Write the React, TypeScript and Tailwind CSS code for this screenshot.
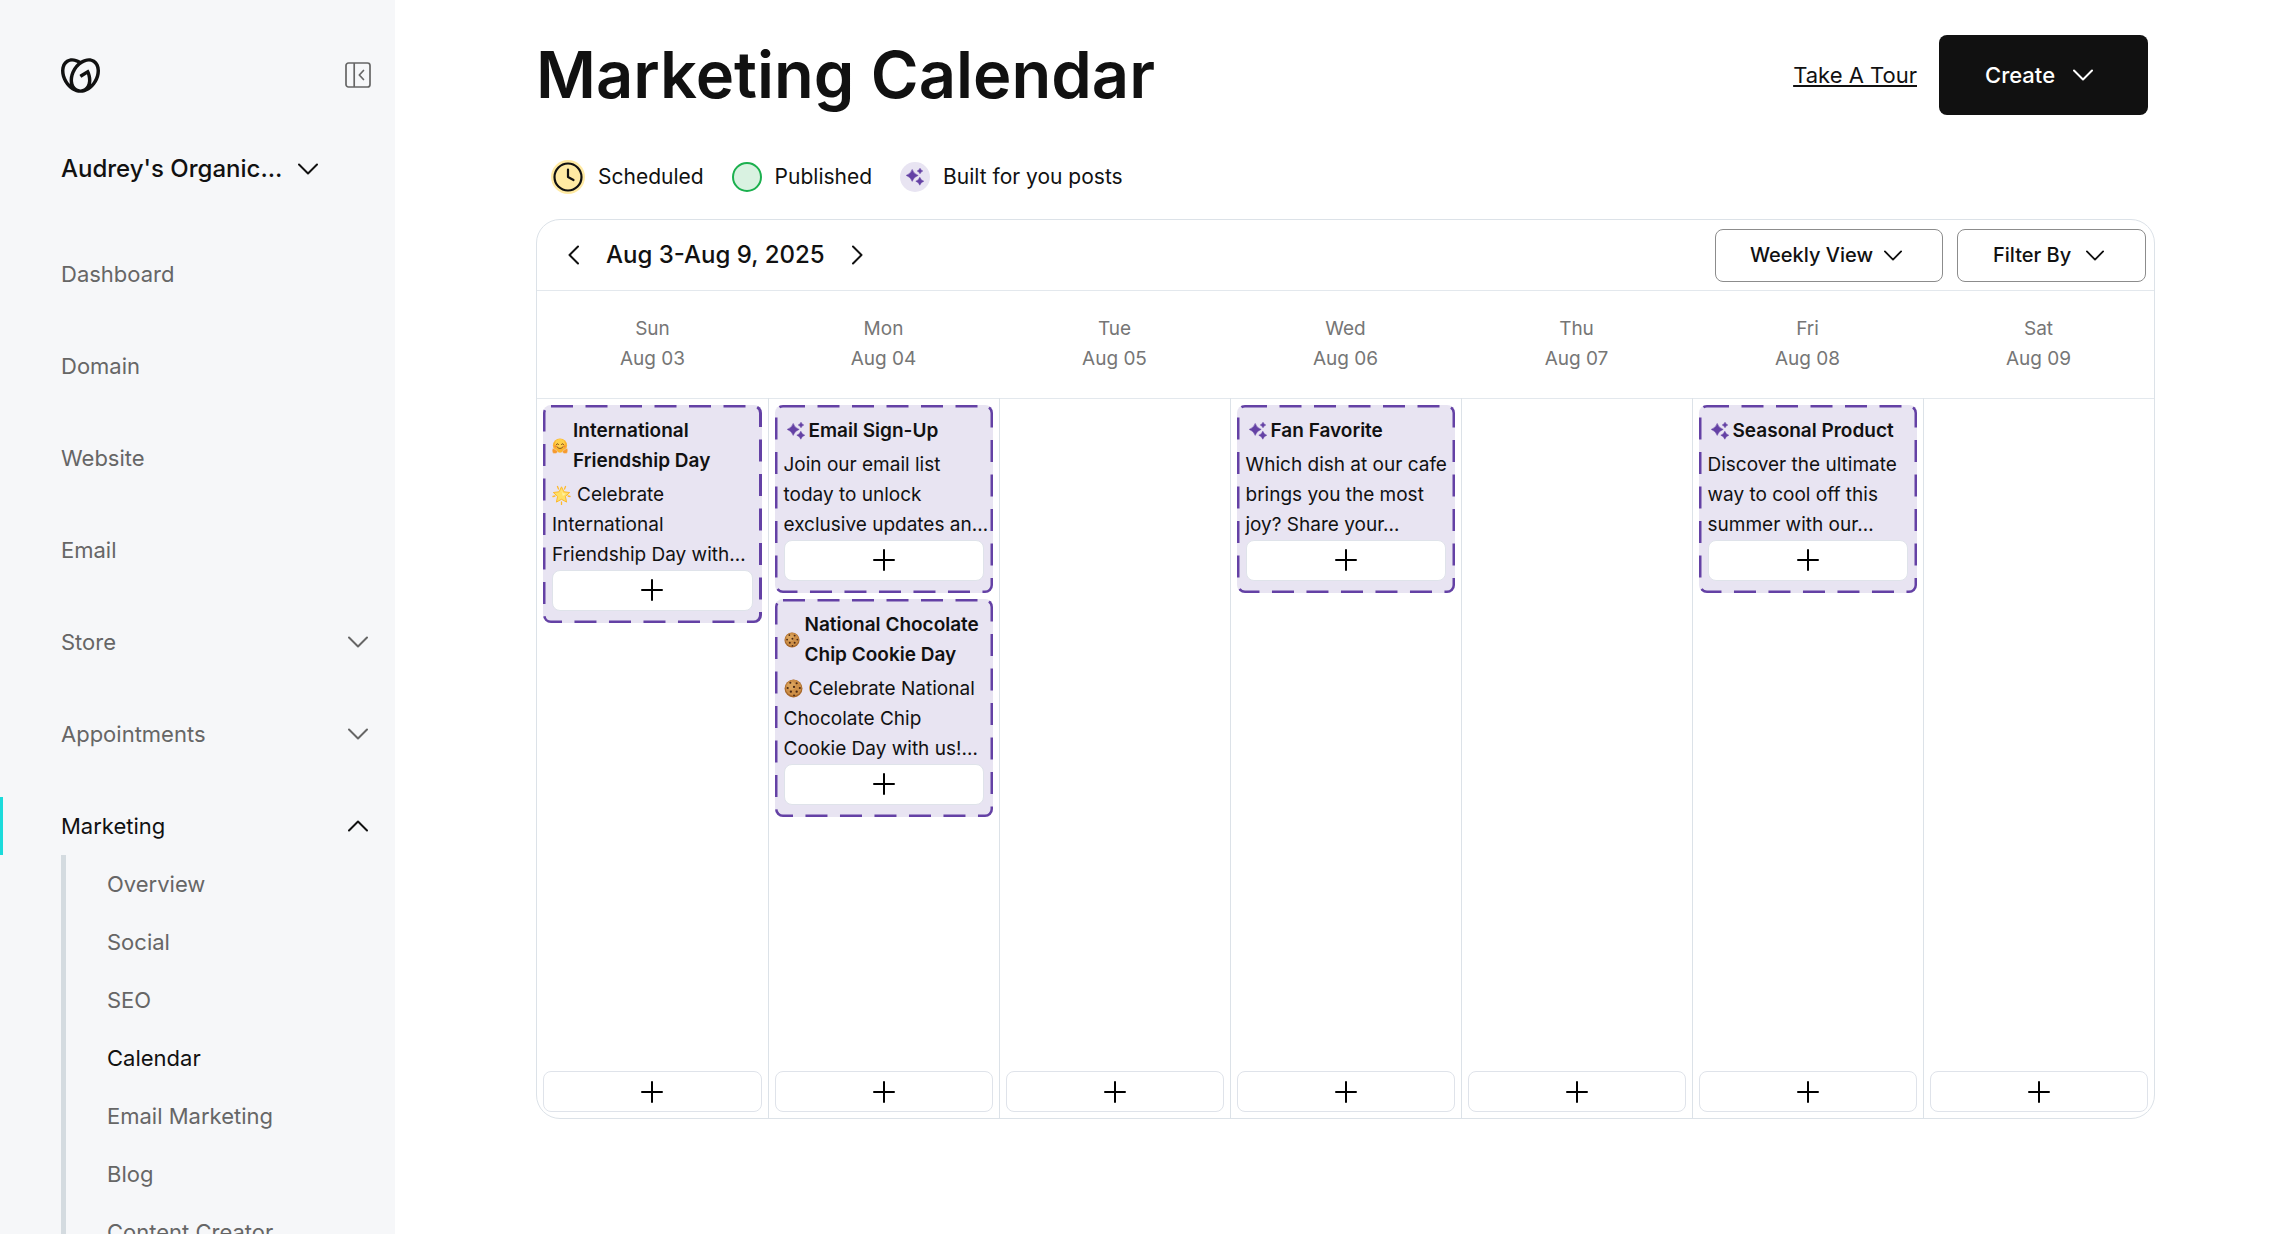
import type { ReactNode } from "react";
import { SiGodaddy } from "react-icons/si";

type NavItem = {
  label: string;
  expandable?: boolean;
  children?: string[];
};

type Post = {
  title: string[];
  body: string[];
  icon: "sparkle" | "hug" | "cookie";
  bodyIcon?: "star" | "cookie";
};

type Day = {
  name: string;
  date: string;
  posts: Post[];
};

const NAV: NavItem[] = [
  { label: "Dashboard" },
  { label: "Domain" },
  { label: "Website" },
  { label: "Email" },
  { label: "Store", expandable: true },
  { label: "Appointments", expandable: true },
  {
    label: "Marketing",
    expandable: true,
    children: ["Overview", "Social", "SEO", "Calendar", "Email Marketing", "Blog", "Content Creator"],
  },
];

const DAYS: Day[] = [
  {
    name: "Sun",
    date: "Aug 03",
    posts: [
      {
        title: ["International", "Friendship Day"],
        body: ["Celebrate", "International", "Friendship Day with…"],
        icon: "hug",
        bodyIcon: "star",
      },
    ],
  },
  {
    name: "Mon",
    date: "Aug 04",
    posts: [
      {
        title: ["Email Sign-Up"],
        body: ["Join our email list", "today to unlock", "exclusive updates an…"],
        icon: "sparkle",
      },
      {
        title: ["National Chocolate", "Chip Cookie Day"],
        body: ["Celebrate National", "Chocolate Chip", "Cookie Day with us!…"],
        icon: "cookie",
        bodyIcon: "cookie",
      },
    ],
  },
  { name: "Tue", date: "Aug 05", posts: [] },
  {
    name: "Wed",
    date: "Aug 06",
    posts: [
      {
        title: ["Fan Favorite"],
        body: ["Which dish at our cafe", "brings you the most", "joy? Share your…"],
        icon: "sparkle",
      },
    ],
  },
  { name: "Thu", date: "Aug 07", posts: [] },
  {
    name: "Fri",
    date: "Aug 08",
    posts: [
      {
        title: ["Seasonal Product"],
        body: ["Discover the ultimate", "way to cool off this", "summer with our…"],
        icon: "sparkle",
      },
    ],
  },
  { name: "Sat", date: "Aug 09", posts: [] },
];

function Chevron({ className }: { className: string }) {
  return (
    <svg viewBox="0 0 20 12" fill="none" stroke="currentColor" strokeWidth="2" strokeLinecap="round" strokeLinejoin="round" className={className} aria-hidden="true">
      <path d="M1 1.500 10 10.500l9-9" />
    </svg>
  );
}

function SideChevron({ direction }: { direction: "left" | "right" }) {
  return (
    <svg viewBox="0 0 12 20" fill="none" stroke="currentColor" strokeWidth="2" strokeLinecap="round" strokeLinejoin="round" className="h-5 w-3" aria-hidden="true">
      <path d={direction === "left" ? "M10 1.500 1.500 10l8.500 8.500" : "M2 1.500 10.500 10 2 18.500"} />
    </svg>
  );
}

function PanelIcon() {
  return (
    <svg viewBox="0 0 26 26" fill="none" stroke="currentColor" strokeWidth="1.700" strokeLinejoin="round" className="size-[26px]" aria-hidden="true">
      <rect x="1" y="1" width="24" height="24" rx="2.500" />
      <path d="M9.200 1v24" />
      <path d="m18.500 8.500-4.200 4.500 4.200 4.500" strokeLinecap="round" />
    </svg>
  );
}

function Plus() {
  return (
    <svg viewBox="0 0 22 22" stroke="currentColor" strokeWidth="2" strokeLinecap="round" className="size-[22px]" aria-hidden="true">
      <path d="M11 1v20M1 11h20" />
    </svg>
  );
}

function Sparkles() {
  return (
    <svg viewBox="0 0 18 18" fill="#6441a5" stroke="#6441a5" strokeWidth=".5" strokeLinejoin="round" className="size-[18px] shrink-0" aria-hidden="true">
      <path d="M6.200 1.400Q7.700 5.900 12.200 7.400 7.700 8.900 6.200 13.400 4.700 8.900.2 7.400 4.700 5.900 6.200 1.400Z" />
      <path d="M14 .2q.7 2.100 2.800 2.800-2.100.7-2.800 2.800-.7-2.100-2.800-2.800 2.100-.7 2.800-2.800Z" />
      <path d="M13.800 9.200q1 3 4 4-3 1-4 4-1-3-4-4 3-1 4-4Z" />
    </svg>
  );
}

function HugFace() {
  return (
    <svg viewBox="0 0 18 18" className="size-4 shrink-0" aria-hidden="true">
      <circle cx="9" cy="8.500" r="8" fill="#fbb52e" />
      <circle cx="9" cy="6.500" r="5.500" fill="#ffd14a" />
      <path d="M5 7.300c.5-1.200 1.800-1.200 2.300 0M10.700 7.300c.5-1.200 1.800-1.200 2.300 0" stroke="#6b3a12" fill="none" strokeLinecap="round" />
      <path d="M5.500 9.800c1.500 2.600 5.500 2.600 7 0" stroke="#6b3a12" fill="none" strokeLinecap="round" />
      <circle cx="4" cy="9.500" r="1.300" fill="#f58a3c" />
      <circle cx="14" cy="9.500" r="1.300" fill="#f58a3c" />
      <path d="M.5 12.500c1-1.200 2-.3 3 .6 2 .4 3 1.500 2.500 3-1 1.800-4 1.900-5.200.4C.2 15.400 0 13.600.5 12.500ZM17.500 12.500c-1-1.200-2-.3-3 .6-2 .4-3 1.500-2.500 3 1 1.800 4 1.900 5.200.4.600-1.100.8-2.900.3-4Z" fill="#f79a2e" stroke="#e8e4f2" strokeWidth=".5" />
    </svg>
  );
}

function GlowStar() {
  return (
    <svg viewBox="0 0 19 20" className="h-5 w-[19px] shrink-0" aria-hidden="true">
      <path d="M5.500 1.500l1 2.500M13.500 1.500l-1 2.500M1 11.500l2-.5M18 11.500l-2-.5M9.500 17v2.500" stroke="#ffb92e" strokeWidth="1.300" strokeLinecap="round" />
      <path d="m9.500 1.800 2.400 5 5.800.7-4.300 3.900 1.200 5.700-5.100-2.800-5.100 2.800 1.200-5.700L1.300 7.500l5.800-.7Z" fill="#ffe066" stroke="#fdb92c" strokeWidth="1" strokeLinejoin="round" />
      <path d="m9.500 5 1.300 3.200 3 .5-3 2.300Z" fill="#fff2a6" />
    </svg>
  );
}

function Cookie({ className }: { className: string }) {
  return (
    <svg viewBox="0 0 18 18" className={className} aria-hidden="true">
      <circle cx="9" cy="9" r="8.500" fill="#a9692c" />
      <circle cx="9" cy="8.300" r="7.500" fill="#cd8f48" />
      <circle cx="7" cy="6.500" r="4" fill="#dba35c" />
      <g fill="#4a2814">
        <circle cx="6" cy="3.500" r="1" />
        <circle cx="12" cy="4" r="1" />
        <circle cx="3.500" cy="8.500" r="1" />
        <circle cx="9.500" cy="7.500" r="1.100" />
        <circle cx="15" cy="8.500" r="1" />
        <circle cx="6.500" cy="12" r="1.100" />
        <circle cx="12" cy="12" r="1.100" />
        <circle cx="9.500" cy="15.500" r=".9" />
      </g>
    </svg>
  );
}

function ClockIcon() {
  return (
    <svg viewBox="0 0 30 30" fill="none" stroke="#111111" strokeWidth="2.200" strokeLinecap="round" strokeLinejoin="round" className="size-[30px]" aria-hidden="true">
      <circle cx="15" cy="15" r="13.500" />
      <path d="M15 7.500V15l5.500 3" />
    </svg>
  );
}

function AddButton({ label }: { label: string }) {
  return (
    <button
      type="button"
      aria-label={label}
      className="flex h-[41px] w-full shrink-0 items-center justify-center rounded-lg border border-[#dfe3ea] bg-white text-black"
    >
      <Plus />
    </button>
  );
}

function PostCard({ post }: { post: Post }) {
  const sparkle = post.icon === "sparkle";

  return (
    <article className="relative overflow-hidden rounded-lg bg-[#e8e4f2] px-[9px] pt-[11px] pb-3 text-[19px]">
      <svg className="pointer-events-none absolute inset-0 size-full" aria-hidden="true">
        <rect width="100%" height="100%" rx="8" fill="none" stroke="#6441a5" strokeWidth="5" strokeDasharray="22 12.500" />
      </svg>
      <h3 className={`flex items-center font-semibold ${sparkle ? "gap-1 pl-[3px]" : "gap-[5px]"}`}>
        {sparkle && <Sparkles />}
        {post.icon === "hug" && <HugFace />}
        {post.icon === "cookie" && <Cookie className="size-4 shrink-0" />}
        <span>
          {post.title.map((line) => (
            <span key={line} className="block whitespace-nowrap">
              {line}
            </span>
          ))}
        </span>
      </h3>
      <p className="mt-1">
        {post.body.map((line, index) => (
          <span key={line} className="flex items-center gap-1.5 whitespace-nowrap">
            {index === 0 && post.bodyIcon === "star" && <GlowStar />}
            {index === 0 && post.bodyIcon === "cookie" && <Cookie className="size-[19px] shrink-0" />}
            {line}
          </span>
        ))}
      </p>
      <AddButton label={`Use ${post.title.join(" ")}`} />
    </article>
  );
}

function Sidebar() {
  return (
    <aside className="w-[395px] shrink-0 overflow-hidden bg-[#f6f7f9] text-[#666666]">
      <div className="mt-[35px] flex h-20 items-center justify-between pr-6 pl-[61px]">
        <a href="#home" aria-label="Home" className="text-[#111111]">
          <SiGodaddy className="size-[39px]" />
        </a>
        <button type="button" aria-label="Collapse menu">
          <PanelIcon />
        </button>
      </div>

      <button type="button" className="mt-8 flex h-11 items-center gap-4 pl-[61px] text-2xl font-medium text-[#111111]">
        Audrey's Organic…
        <Chevron className="h-3 w-5" />
      </button>

      <nav className="mt-[54px] text-[22px]">
        <ul className="flex flex-col gap-[34px]">
          {NAV.map((item) => (
            <li key={item.label}>
              <a
                href={`#${item.label.toLowerCase()}`}
                className={`flex h-[58px] items-center justify-between border-l-[3px] pr-[27px] pl-[58px] ${
                  item.children ? "border-[#1bdbdb] text-[#111111]" : "border-transparent"
                }`}
              >
                {item.label}
                {item.expandable && <Chevron className={item.children ? "h-3 w-5 rotate-180" : "h-3 w-5"} />}
              </a>
              {item.children && (
                <ul className="ml-[61px] border-l-[5px] border-[#d4dbe0]">
                  {item.children.map((child) => (
                    <li key={child}>
                      <a
                        href={`#${child.toLowerCase().replace(" ", "-")}`}
                        className={`flex h-[58px] items-center pl-[41px] ${child === "Calendar" ? "text-[#111111]" : ""}`}
                      >
                        {child}
                      </a>
                    </li>
                  ))}
                </ul>
              )}
            </li>
          ))}
        </ul>
      </nav>
    </aside>
  );
}

function LegendItem({ marker, children }: { marker: ReactNode; children: ReactNode }) {
  return (
    <li className="flex items-center gap-[13px]">
      {marker}
      {children}
    </li>
  );
}

export default function App() {
  return (
    <div className="flex h-screen overflow-hidden bg-white font-['Inter',sans-serif] text-[#111111]">
      <Sidebar />

      <main className="min-w-0 flex-1 px-[141px] pt-[35px]">
        <header className="flex h-20 items-center justify-between pr-[7px]">
          <h1 className="text-[65px] leading-20 font-semibold">Marketing Calendar</h1>
          <div className="flex items-center gap-[22px] text-[22px]">
            <a href="#tour" className="underline underline-offset-2">
              Take A Tour
            </a>
            <button type="button" aria-haspopup="menu" className="flex h-20 w-[209px] items-center gap-[18px] rounded-lg bg-[#111111] pl-[46px] font-medium text-white">
              Create
              <Chevron className="h-3 w-5" />
            </button>
          </div>
        </header>

        <ul className="mt-[45px] flex h-[34px] items-center gap-7 pl-[15px] text-[21px]">
          <LegendItem
            marker={
              <span className="flex size-[34px] items-center justify-center rounded-full bg-[#ffeaa3]">
                <ClockIcon />
              </span>
            }
          >
            Scheduled
          </LegendItem>
          <LegendItem marker={<span className="size-[30px] rounded-full border-2 border-[#1bb04e] bg-[#d9f2e1]" />}>
            Published
          </LegendItem>
          <LegendItem
            marker={
              <span className="flex size-[30px] items-center justify-center rounded-full bg-[#e8e4f2]">
                <Sparkles />
              </span>
            }
          >
            Built for you posts
          </LegendItem>
        </ul>

        <section className="mt-[25px] overflow-hidden rounded-3xl border border-[#dce2e8]" aria-label="Weekly calendar">
          <div className="flex h-[71px] items-center justify-between border-b border-[#e3e8ed] pr-2 pl-[31px]">
            <div className="flex items-center gap-[26px] text-2xl font-medium">
              <button type="button" aria-label="Previous week">
                <SideChevron direction="left" />
              </button>
              <span>Aug 3-Aug 9, 2025</span>
              <button type="button" aria-label="Next week">
                <SideChevron direction="right" />
              </button>
            </div>
            <div className="flex items-center gap-3.5 text-[20px] font-medium">
              <div className="relative">
                <select
                  aria-label="Calendar view"
                  className="h-[53px] w-[228px] appearance-none rounded-lg border border-[#8c8c8c] bg-white pl-[34px]"
                >
                  <option>Weekly View</option>
                  <option>Monthly View</option>
                </select>
                <Chevron className="pointer-events-none absolute top-[21px] right-[41px] h-[11px] w-[18px]" />
              </div>
              <button type="button" aria-haspopup="menu" className="flex h-[53px] w-[189px] items-center gap-[15px] rounded-lg border border-[#8c8c8c] pl-[35px]">
                Filter By
                <Chevron className="h-[11px] w-[18px]" />
              </button>
            </div>
          </div>

          <table className="w-full table-fixed border-collapse text-[19px] leading-[30px]">
            <thead>
              <tr className="h-[107px] border-b border-[#e3e8ed] text-[#767676]">
                {DAYS.map((day) => (
                  <th key={day.date} scope="col" className="p-0 font-normal">
                    <span className="block">{day.name}</span>
                    <span className="block">{day.date}</span>
                  </th>
                ))}
              </tr>
            </thead>
            <tbody>
              <tr>
                {DAYS.map((day) => (
                  <td key={day.date} className="h-[720px] border-l border-[#dce2e8] p-1.5 align-top first:border-l-0">
                    <div className="flex h-full flex-col gap-1.5">
                      {day.posts.map((post) => (
                        <PostCard key={post.title[0]} post={post} />
                      ))}
                      <div className="mt-auto">
                        <AddButton label={`Add post on ${day.date}`} />
                      </div>
                    </div>
                  </td>
                ))}
              </tr>
            </tbody>
          </table>
        </section>
      </main>
    </div>
  );
}
